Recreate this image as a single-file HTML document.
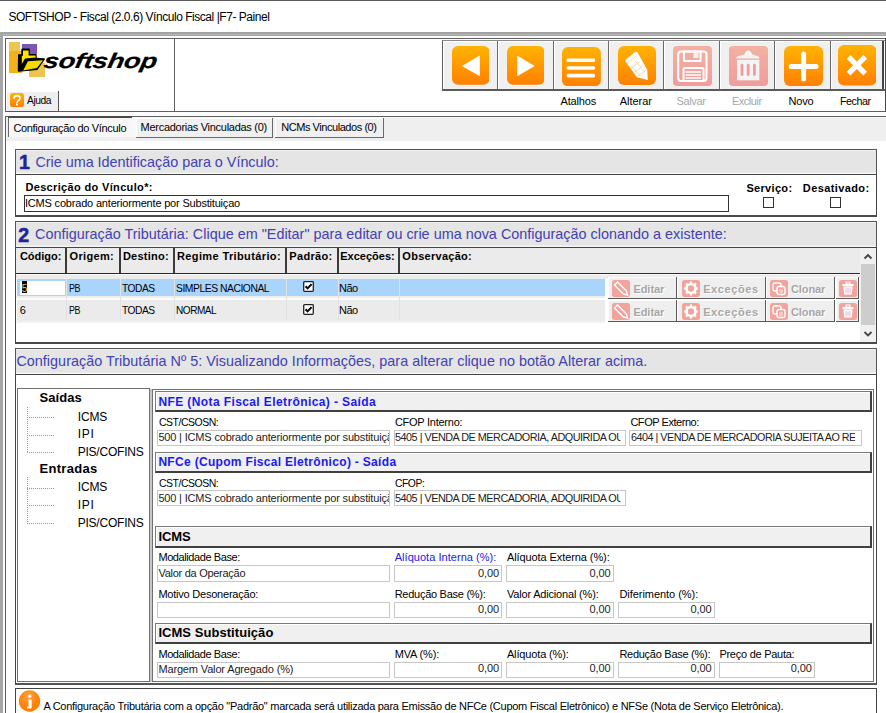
<!DOCTYPE html><html><head><meta charset='utf-8'><style>
*{margin:0;padding:0;box-sizing:border-box}
html,body{width:886px;height:713px;overflow:hidden;background:#fff}
body{position:relative;font-family:"Liberation Sans",sans-serif;color:#000}
div,span,svg{position:absolute}
span{white-space:pre;line-height:0;display:block}
span>i{font-style:normal}
.t{font-size:11px;letter-spacing:-0.25px}
.b{font-size:11px;font-weight:bold;letter-spacing:0.2px}
.btn{background:#f0f0f0;border-right:1px solid #6a6a6a;border-bottom:1px solid #6a6a6a;box-shadow:inset 1px 1px 0 #fff}
.inp{background:#fff;border:1px solid #c9c9c9}
.hdr{background:#f0f0f0;border:1px solid #6a6a6a;box-shadow:inset -1px -2px 0 #404040, inset 1px 1px 0 #fff}
</style></head><body><div style="left:0px;top:0px;width:886px;height:1px;background:#5b5b5b"></div>
<span style="left:8.4px;top:17.24px;font-size:12px;color:#000;letter-spacing:-0.461px;">SOFTSHOP - Fiscal (2.0.6) Vínculo Fiscal |F7- Painel</span>
<div style="left:0px;top:32px;width:886px;height:4.2px;background:#a2a2a2"></div>
<div style="left:3px;top:34.2px;width:883px;height:0.6px;background:#b8b8b8"></div>
<div style="left:0px;top:32px;width:3px;height:681px;background:#a6a6a6"></div>
<div style="left:3px;top:36px;width:883px;height:677px;background:#fcfcfc"></div>
<div style="left:5px;top:38px;width:881px;height:74px;background:#fff;border:1px solid #5f5f5f;border-right:1px solid #4a4a4a"></div>
<div style="left:174px;top:39px;width:1px;height:72px;background:#5f5f5f"></div>
<div style="left:9px;top:42px;width:11px;height:10px;background:#ecc64e"></div>
<div style="left:9px;top:51px;width:13px;height:22px;background:#f3b21c"></div>
<div style="left:22px;top:44px;width:14.5px;height:10px;background:#7b57b3"></div>
<div style="left:29px;top:63px;width:16px;height:14px;background:#ecc54e"></div>
<svg style="left:14px;top:44px" width="34" height="32" viewBox="0 0 34 32">
<path d="M4 10.3 L7.3 10.3 L7.3 5.2 Q7.5 4.5 8.3 4.5 L15 4.5 Q15.8 4.6 15.8 5.4 L15.8 10 L21.8 10 Q22.6 10.2 22.7 11 L22.7 13.8 L30.2 14.2 Q31.4 14.4 30.8 15.4 L23.4 26 L4.8 27.8 Q3.8 27.8 3.8 26.8 Z" fill="#000"/>
<path d="M9 6.6 L14.6 6.6 L14.6 11.5 L21.6 11.5 L21.6 13.6 L11 14.6 L7.8 20 L7.8 11.8 L9 11.8 Z" fill="#ffe400"/>
<path d="M13.9 17.2 L28.9 16.2 L23 23.9 L9.2 26.4 Z" fill="#f5dc00"/>
</svg>
<span style="left:44.4px;top:61.12px;font-size:21px;font-weight:bold;color:#000;letter-spacing:-0.200px;font-style:italic;-webkit-text-stroke:0.2px #000;transform:scaleX(1.30) skewX(-8deg);transform-origin:0 0">softshop</span>
<div style="left:6px;top:91px;width:53px;height:21px;background:#efefef;border-right:1px solid #555;border-bottom:1px solid #555;box-shadow:inset 1px 1px 0 #fff"></div>
<svg style="left:10px;top:93px" width="14" height="14" viewBox="0 0 14 14"><defs><linearGradient id="gq" x1="0" y1="0" x2="0" y2="1"><stop offset="0" stop-color="#ffb400"/><stop offset="1" stop-color="#ff7c00"/></linearGradient></defs><rect width="14" height="14" rx="2.5" fill="url(#gq)"/><path d="M4 5.2 Q4.3 2.6 7.1 2.6 Q10 2.7 10.1 5.2 Q10 6.6 8.3 7.6 Q7.1 8.3 7.1 9.8" fill="none" stroke="#fff" stroke-width="1.6" stroke-linecap="round"/><circle cx="7" cy="11.6" r="1.05" fill="#fff"/></svg>
<span style="left:26.9px;top:99.69px;font-size:11px;color:#000;letter-spacing:-0.500px;transform:scaleX(0.9328);transform-origin:0 0;--x:0px;">Ajuda</span>
<div style="left:442px;top:40px;width:443px;height:51px;border-left:1px solid #5f5f5f;border-bottom:2px solid #5a5a5a;border-top:1px solid #8a8a8a"></div>
<div style="left:443px;top:41px;width:55px;height:48px;background:#f0f0f0;border-right:1.5px solid #6a6a6a;box-shadow:inset 1px 1px 0 #fff"></div>
<div style="left:498px;top:41px;width:56px;height:48px;background:#f0f0f0;border-right:1.5px solid #6a6a6a;box-shadow:inset 1px 1px 0 #fff"></div>
<div style="left:554px;top:41px;width:55px;height:48px;background:#f0f0f0;border-right:1.5px solid #6a6a6a;box-shadow:inset 1px 1px 0 #fff"></div>
<div style="left:609px;top:41px;width:55px;height:48px;background:#f0f0f0;border-right:1.5px solid #6a6a6a;box-shadow:inset 1px 1px 0 #fff"></div>
<div style="left:664px;top:41px;width:56px;height:48px;background:#f0f0f0;border-right:1.5px solid #6a6a6a;box-shadow:inset 1px 1px 0 #fff"></div>
<div style="left:720px;top:41px;width:55px;height:48px;background:#f0f0f0;border-right:1.5px solid #6a6a6a;box-shadow:inset 1px 1px 0 #fff"></div>
<div style="left:775px;top:41px;width:56px;height:48px;background:#f0f0f0;border-right:1.5px solid #6a6a6a;box-shadow:inset 1px 1px 0 #fff"></div>
<div style="left:831px;top:41px;width:53px;height:48px;background:#f0f0f0;border-right:2px solid #454545;box-shadow:inset 1px 1px 0 #fff"></div>
<span style="left:560.6px;top:100.79px;font-size:11px;color:#000;letter-spacing:-0.182px;">Atalhos</span>
<span style="left:619.8px;top:100.79px;font-size:11px;color:#000;letter-spacing:-0.056px;">Alterar</span>
<span style="left:676.4px;top:100.79px;font-size:11px;color:#a8a8a8;letter-spacing:-0.323px;">Salvar</span>
<span style="left:732.0px;top:100.79px;font-size:11px;color:#a8a8a8;letter-spacing:-0.490px;">Excluir</span>
<span style="left:788.6px;top:100.79px;font-size:11px;color:#000;letter-spacing:-0.254px;">Novo</span>
<span style="left:839.6px;top:100.79px;font-size:11px;color:#000;letter-spacing:-0.500px;transform:scaleX(0.9790);transform-origin:0 0;--x:0px;">Fechar</span>
<svg style="left:451.6px;top:46.2px" width="37.6" height="38.8" viewBox="0 0 37.6 38.8"><defs><linearGradient id="go1" x1="0" y1="0" x2="0" y2="1"><stop offset="0" stop-color="#ffb300"/><stop offset="1" stop-color="#ff8000"/></linearGradient></defs><rect x="0" y="0" width="37.6" height="38.8" rx="6" fill="url(#go1)"/><path d="M9.9 20 L27.8 9.6 L27.8 30.2 Z" fill="#fff"/></svg>
<svg style="left:506.7px;top:46.2px" width="37.7" height="38.8" viewBox="0 0 37.7 38.8"><defs><linearGradient id="go2" x1="0" y1="0" x2="0" y2="1"><stop offset="0" stop-color="#ffb300"/><stop offset="1" stop-color="#ff8000"/></linearGradient></defs><rect x="0" y="0" width="37.7" height="38.8" rx="6" fill="url(#go2)"/><path d="M27.8 20 L10.1 9.6 L10.1 30.2 Z" fill="#fff"/></svg>
<svg style="left:562.4px;top:46.5px" width="38.9" height="39.2" viewBox="0 0 38.9 39.2"><defs><linearGradient id="go3" x1="0" y1="0" x2="0" y2="1"><stop offset="0" stop-color="#ffb300"/><stop offset="1" stop-color="#ff8000"/></linearGradient></defs><rect x="0" y="0" width="38.9" height="39.2" rx="6" fill="url(#go3)"/><rect x="4.6" y="11.5" width="28.5" height="3.6" rx="1.5" fill="#fff"/><rect x="4.6" y="19.2" width="28.5" height="3.6" rx="1.5" fill="#fff"/><rect x="4.6" y="26.8" width="28.5" height="3.6" rx="1.5" fill="#fff"/></svg>
<svg style="left:618px;top:46px" width="38" height="39" viewBox="0 0 38 39"><defs><linearGradient id="go4" x1="0" y1="0" x2="0" y2="1"><stop offset="0" stop-color="#ffb300"/><stop offset="1" stop-color="#ff8000"/></linearGradient></defs><rect x="0" y="0" width="38" height="39" rx="6" fill="url(#go4)"/><path d="M17.2 6 Q18.5 5.2 19.5 6.5 L29.2 23.4 L29.8 34 L18.8 31.2 L7.6 15.6 Q6.8 14.2 8 13.2 Z" fill="#fff"/><path d="M8.8 17.2 L19.8 8.8 M12.5 22.5 L21.5 15.8 M15.5 26.8 L24.5 20 M18.8 31 L28.6 23.8 M13 19.5 L22.5 30 M16.8 14.5 L26.6 25.8" stroke="#f8c888" stroke-width="0.7" fill="none"/></svg>
<svg style="left:672.5px;top:46px" width="39" height="40" viewBox="0 0 39 40"><defs><linearGradient id="gd5" x1="0" y1="0" x2="0" y2="1"><stop offset="0" stop-color="#f2b2a2"/><stop offset="1" stop-color="#f09c9c"/></linearGradient></defs><rect x="0" y="0" width="39" height="40" rx="4" fill="url(#gd5)"/><rect x="5.2" y="5.4" width="28.3" height="29.6" rx="3" fill="none" stroke="#fff" stroke-width="2"/><rect x="11" y="5.5" width="16.5" height="9.5" fill="none" stroke="#fff" stroke-width="2"/><rect x="20.5" y="7" width="5" height="5" fill="#f0f0f0"/><rect x="10.5" y="22" width="20" height="13" rx="1.5" fill="none" stroke="#fff" stroke-width="2"/><path d="M12.5 26 H28 M12.5 29 H28 M12.5 32 H28" stroke="#fff" stroke-width="1.3"/></svg>
<svg style="left:728.5px;top:45.5px" width="39" height="40" viewBox="0 0 39 40"><defs><linearGradient id="gd6" x1="0" y1="0" x2="0" y2="1"><stop offset="0" stop-color="#f2b2a2"/><stop offset="1" stop-color="#f09c9c"/></linearGradient></defs><rect x="0" y="0" width="39" height="40" rx="4" fill="url(#gd6)"/><path d="M7 12.5 Q7.5 10 10.5 9.8 L15 8.5 Q17 4.5 19.3 4.6 Q21.5 4.5 23.5 8.5 L27.5 9.8 Q30.5 10.5 30.5 12.5 Z" fill="#f4f4f4"/><rect x="8" y="13.8" width="22.3" height="20.5" fill="#f4f4f4"/><rect x="11.6" y="17.8" width="2.8" height="12.2" rx="1.4" fill="#f09c9c"/><rect x="17.8" y="17.8" width="2.8" height="12.2" rx="1.4" fill="#f09c9c"/><rect x="24" y="17.8" width="2.8" height="12.2" rx="1.4" fill="#f09c9c"/></svg>
<svg style="left:783.7px;top:45.6px" width="39" height="40" viewBox="0 0 39 40"><defs><linearGradient id="go7" x1="0" y1="0" x2="0" y2="1"><stop offset="0" stop-color="#ffb300"/><stop offset="1" stop-color="#ff8000"/></linearGradient></defs><rect x="0" y="0" width="39" height="40" rx="6" fill="url(#go7)"/><rect x="17.1" y="5.6" width="5" height="29.8" rx="2.5" fill="#fff"/><rect x="4.7" y="18" width="29.8" height="5" rx="2.5" fill="#fff"/></svg>
<svg style="left:837.8px;top:45.2px" width="38.5" height="40.5" viewBox="0 0 38.5 40.5"><defs><linearGradient id="go8" x1="0" y1="0" x2="0" y2="1"><stop offset="0" stop-color="#ffb300"/><stop offset="1" stop-color="#ff8000"/></linearGradient></defs><rect x="0" y="0" width="38.5" height="40.5" rx="6" fill="url(#go8)"/><path d="M10.6 11.9 L27.2 28.6 M27.2 11.9 L10.6 28.6" stroke="#fff" stroke-width="5.2" stroke-linecap="butt"/></svg>
<div style="left:5px;top:116px;width:881px;height:597px;background:#fff;border-top:1px solid #5f5f5f;border-left:1px solid #5f5f5f"></div>
<div style="left:6px;top:117px;width:880px;height:24px;background:#efefef"></div>
<div style="left:6px;top:117px;width:880px;height:1px;background:#f8f8f8"></div>
<div style="left:132px;top:117px;width:4px;height:20px;background:#f8f8f8"></div>
<div style="left:8px;top:117px;width:124px;height:20px;background:#f7f7f7;border-left:1px solid #6a6a6a"></div>
<div style="left:8px;top:116px;width:124px;height:1.5px;background:#4a4a4a"></div>
<span style="left:13.4px;top:127.79px;font-size:11px;color:#000;letter-spacing:-0.334px;">Configuração do Vínculo</span>
<div style="left:136px;top:117.8px;width:137px;height:19.8px;background:#f0f0f0;border-right:1px solid #6a6a6a;border-bottom:1px solid #6a6a6a;box-shadow:inset 1px 1px 0 #fff"></div>
<span style="left:140.6px;top:126.89px;font-size:11px;color:#000;letter-spacing:-0.285px;">Mercadorias Vinculadas (0)</span>
<div style="left:275px;top:117.8px;width:109px;height:19.8px;background:#f0f0f0;border-right:1px solid #6a6a6a;border-bottom:1px solid #6a6a6a;box-shadow:inset 1px 1px 0 #fff"></div>
<span style="left:281.2px;top:126.89px;font-size:11px;color:#000;letter-spacing:-0.442px;">NCMs Vinculados (0)</span>
<div style="left:15px;top:149px;width:862px;height:26px;background:#e5e5e5;border:1px solid #555;border-bottom:1px solid #555;box-shadow:inset 0 1px 0 #f2f2f2, inset 0 -1.5px 0 #f6f6f6"></div>
<div style="left:15px;top:174px;width:862px;height:43.2px;background:#fff;border:1px solid #444;border-bottom:2px solid #4a4a4a"></div>
<span style="left:19.0px;top:161.81px;font-size:19.6px;font-weight:bold;color:#22229a;letter-spacing:0.000px;-webkit-text-stroke:0.5px #22229a">1</span>
<span style="left:35.4px;top:162.21px;font-size:14.4px;color:#4141b1;letter-spacing:-0.018px;">Crie uma Identificação para o Vínculo:</span>
<span style="left:25.4px;top:186.79px;font-size:11px;font-weight:bold;color:#000;letter-spacing:0.345px;">Descrição do Vínculo*:</span>
<div style="left:24px;top:195px;width:705px;height:17px;background:#fff;border:1px solid #333"></div>
<span style="left:25.0px;top:203.19px;font-size:11px;color:#000;letter-spacing:-0.189px;">ICMS cobrado anteriormente por Substituiçao</span>
<span style="left:746.4px;top:187.79px;font-size:11px;font-weight:bold;color:#000;letter-spacing:0.322px;">Serviço:</span>
<span style="left:802.8px;top:187.79px;font-size:11px;font-weight:bold;color:#000;letter-spacing:0.391px;">Desativado:</span>
<div style="left:763px;top:197px;width:11px;height:11px;border:1px solid #333;background:#fff"></div>
<div style="left:830px;top:197px;width:11px;height:11px;border:1px solid #333;background:#fff"></div>
<div style="left:15px;top:221px;width:862px;height:27px;background:#e5e5e5;border:1px solid #555;border-bottom:1px solid #555;box-shadow:inset 0 1px 0 #f2f2f2, inset 0 -1.5px 0 #f6f6f6"></div>
<div style="left:15px;top:247px;width:862px;height:96.6px;background:#fff;border:1px solid #444;border-bottom:2px solid #4a4a4a"></div>
<span style="left:18.2px;top:235.31px;font-size:19.6px;font-weight:bold;color:#22229a;letter-spacing:0.000px;-webkit-text-stroke:0.5px #22229a">2</span>
<span style="left:35.1px;top:233.81px;font-size:14.4px;color:#4141b1;letter-spacing:0.006px;">Configuração Tributária: Clique em &quot;Editar&quot; para editar ou crie uma nova Configuração clonando a existente:</span>
<div style="left:16px;top:248px;width:844px;height:25px;background:#ebebeb"></div>
<div style="left:16px;top:272.5px;width:844px;height:1.7px;background:#2a2a2a"></div>
<div style="left:65px;top:248px;width:2px;height:25px;background:#3a3a3a"></div>
<div style="left:118.5px;top:248px;width:2px;height:25px;background:#3a3a3a"></div>
<div style="left:172.5px;top:248px;width:2px;height:25px;background:#3a3a3a"></div>
<div style="left:285px;top:248px;width:2px;height:25px;background:#3a3a3a"></div>
<div style="left:336.5px;top:248px;width:2px;height:25px;background:#3a3a3a"></div>
<div style="left:398px;top:248px;width:2px;height:25px;background:#3a3a3a"></div>
<span style="left:19.9px;top:255.69px;font-size:11px;font-weight:bold;color:#000;letter-spacing:0.004px;">Código:</span>
<span style="left:69.5px;top:255.69px;font-size:11px;font-weight:bold;color:#000;letter-spacing:0.332px;">Origem:</span>
<span style="left:122.9px;top:255.69px;font-size:11px;font-weight:bold;color:#000;letter-spacing:0.238px;">Destino:</span>
<span style="left:177.0px;top:255.69px;font-size:11px;font-weight:bold;color:#000;letter-spacing:0.376px;">Regime Tributário:</span>
<span style="left:289.29999999999995px;top:255.69px;font-size:11px;font-weight:bold;color:#000;letter-spacing:0.318px;">Padrão:</span>
<span style="left:340.2px;top:255.69px;font-size:11px;font-weight:bold;color:#000;letter-spacing:0.017px;">Exceções:</span>
<span style="left:402.29999999999995px;top:255.69px;font-size:11px;font-weight:bold;color:#000;letter-spacing:0.282px;">Observação:</span>
<div style="left:16px;top:274px;width:844px;height:5px;background:#ececec"></div>
<div style="left:16px;top:274px;width:844px;height:1px;background:#fafafa"></div>
<div style="left:17px;top:278.8px;width:588px;height:17.2px;background:#a9d5fd"></div>
<div style="left:16px;top:296px;width:589px;height:2px;background:#f1eeea"></div>
<div style="left:16px;top:298px;width:589px;height:2px;background:#fcfcfc"></div>
<div style="left:17px;top:300px;width:588px;height:20.5px;background:#ebebeb"></div>
<div style="left:16px;top:320.5px;width:589px;height:2px;background:#f3f3f3"></div>
<div style="left:66px;top:279px;width:1px;height:41px;background:#e2e2e2"></div>
<div style="left:119.5px;top:279px;width:1px;height:41px;background:#e2e2e2"></div>
<div style="left:173.5px;top:279px;width:1px;height:41px;background:#e2e2e2"></div>
<div style="left:286px;top:279px;width:1px;height:41px;background:#e2e2e2"></div>
<div style="left:337.5px;top:279px;width:1px;height:41px;background:#e2e2e2"></div>
<div style="left:399px;top:279px;width:1px;height:41px;background:#e2e2e2"></div>
<div style="left:19.8px;top:280.8px;width:45px;height:14.2px;background:#fff"></div>
<div style="left:22px;top:281px;width:5px;height:12px;background:#000"></div>
<span style="left:21.7px;top:288.54px;font-size:10px;color:#e8c080;letter-spacing:0.000px;">5</span>
<span style="left:19.7px;top:310.09px;font-size:11px;color:#000;letter-spacing:-0.250px;">6</span>
<span style="left:69.0px;top:287.99px;font-size:11px;color:#000;letter-spacing:-0.500px;transform:scaleX(0.8094);transform-origin:0 0;--x:0px;">PB</span>
<span style="left:122.4px;top:287.99px;font-size:11px;color:#000;letter-spacing:-0.500px;transform:scaleX(0.9277);transform-origin:0 0;--x:0px;">TODAS</span>
<span style="left:176.3px;top:287.99px;font-size:11px;color:#000;letter-spacing:-0.500px;transform:scaleX(0.9410);transform-origin:0 0;--x:0px;">SIMPLES NACIONAL</span>
<span style="left:339.0px;top:287.99px;font-size:11px;color:#000;letter-spacing:-0.481px;">Não</span>
<span style="left:69.0px;top:310.09px;font-size:11px;color:#000;letter-spacing:-0.500px;transform:scaleX(0.8094);transform-origin:0 0;--x:0px;">PB</span>
<span style="left:122.4px;top:310.09px;font-size:11px;color:#000;letter-spacing:-0.500px;transform:scaleX(0.9277);transform-origin:0 0;--x:0px;">TODAS</span>
<span style="left:176.3px;top:310.09px;font-size:11px;color:#000;letter-spacing:-0.500px;transform:scaleX(0.9113);transform-origin:0 0;--x:0px;">NORMAL</span>
<span style="left:339.0px;top:310.09px;font-size:11px;color:#000;letter-spacing:-0.481px;">Não</span>
<svg style="left:303px;top:281.4px" width="11" height="11" viewBox="0 0 11 11"><rect x="0.7" y="0.7" width="9.6" height="9.6" rx="0.8" fill="#fff" stroke="#222" stroke-width="1.3"/><path d="M2.6 5.3 L4.6 7.4 L8.6 3.1" stroke="#000" stroke-width="2" fill="none"/></svg>
<svg style="left:303px;top:304.1px" width="11" height="11" viewBox="0 0 11 11"><rect x="0.7" y="0.7" width="9.6" height="9.6" rx="0.8" fill="#fff" stroke="#222" stroke-width="1.3"/><path d="M2.6 5.3 L4.6 7.4 L8.6 3.1" stroke="#000" stroke-width="2" fill="none"/></svg>
<div style="left:607.5px;top:276.5px;width:69.0px;height:22px;background:#efefef;border-right:1.5px solid #5a5a5a;border-bottom:1.5px solid #5a5a5a;box-shadow:inset 1px 1px 0 #fff"></div>
<div style="left:677px;top:276.5px;width:88.5px;height:22px;background:#efefef;border-right:1.5px solid #5a5a5a;border-bottom:1.5px solid #5a5a5a;box-shadow:inset 1px 1px 0 #fff"></div>
<div style="left:766px;top:276.5px;width:68.5px;height:22px;background:#efefef;border-right:1.5px solid #5a5a5a;border-bottom:1.5px solid #5a5a5a;box-shadow:inset 1px 1px 0 #fff"></div>
<div style="left:836px;top:276.5px;width:22.700000000000045px;height:22px;background:#efefef;border-right:1.5px solid #5a5a5a;border-bottom:1.5px solid #5a5a5a;box-shadow:inset 1px 1px 0 #fff"></div>
<svg style="left:612px;top:279.5px" width="18" height="17" viewBox="0 0 18 17"><rect x="0" y="0" width="18" height="17" rx="2.5" fill="#f2a49c"/><path d="M2.5 5 L5.5 2 L14.5 11 L15.5 15 L11.5 14 Z" fill="none" stroke="#fff" stroke-width="1.4"/></svg>
<span style="left:634.4px;top:289.69px;font-size:11px;font-weight:bold;color:#ffffff;letter-spacing:-0.039px;">Editar</span>
<span style="left:633.4px;top:288.69px;font-size:11px;font-weight:bold;color:#a6a6a6;letter-spacing:-0.039px;">Editar</span>
<svg style="left:682px;top:279.5px" width="18" height="17" viewBox="0 0 18 17"><rect x="0" y="0" width="18" height="17" rx="2.5" fill="#f2a49c"/><circle cx="9" cy="8.5" r="4.5" fill="none" stroke="#fff" stroke-width="2.6"/><path d="M9 1.5 V4 M9 13 V15.5 M2 8.5 H4.5 M13.5 8.5 H16 M4 3.5 L5.8 5.3 M12.2 11.7 L14 13.5 M14 3.5 L12.2 5.3 M5.8 11.7 L4 13.5" stroke="#fff" stroke-width="2.2"/></svg>
<span style="left:704.1999999999999px;top:289.69px;font-size:11px;font-weight:bold;color:#ffffff;letter-spacing:0.594px;">Exceções</span>
<span style="left:703.1999999999999px;top:288.69px;font-size:11px;font-weight:bold;color:#a6a6a6;letter-spacing:0.594px;">Exceções</span>
<svg style="left:770px;top:279.5px" width="18" height="17" viewBox="0 0 18 17"><rect x="0" y="0" width="18" height="17" rx="2.5" fill="#f2a49c"/><rect x="3" y="3" width="8" height="8" rx="2" fill="none" stroke="#fff" stroke-width="1.4"/><rect x="7" y="6.5" width="8" height="8" rx="2" fill="#f2a49c" stroke="#fff" stroke-width="1.4"/><path d="M9 10 H13 M9 12 H13" stroke="#fff" stroke-width="0.8"/></svg>
<span style="left:792.0px;top:289.69px;font-size:11px;font-weight:bold;color:#ffffff;letter-spacing:-0.111px;">Clonar</span>
<span style="left:791.0px;top:288.69px;font-size:11px;font-weight:bold;color:#a6a6a6;letter-spacing:-0.111px;">Clonar</span>
<svg style="left:838.5px;top:279.5px" width="18" height="17" viewBox="0 0 18 17"><rect x="0" y="0" width="18" height="17" rx="2.5" fill="#f2a49c"/><rect x="3.5" y="4" width="11" height="2" fill="#fff"/><rect x="7" y="2" width="4" height="2" fill="none" stroke="#fff" stroke-width="1"/><path d="M4.5 6.5 H13.5 L12.8 14.5 H5.2 Z" fill="#fff"/><path d="M7 8 V13 M9 8 V13 M11 8 V13" stroke="#e8b0e0" stroke-width="1"/></svg>
<div style="left:607.5px;top:299.5px;width:69.0px;height:22px;background:#efefef;border-right:1.5px solid #5a5a5a;border-bottom:1.5px solid #5a5a5a;box-shadow:inset 1px 1px 0 #fff"></div>
<div style="left:677px;top:299.5px;width:88.5px;height:22px;background:#efefef;border-right:1.5px solid #5a5a5a;border-bottom:1.5px solid #5a5a5a;box-shadow:inset 1px 1px 0 #fff"></div>
<div style="left:766px;top:299.5px;width:68.5px;height:22px;background:#efefef;border-right:1.5px solid #5a5a5a;border-bottom:1.5px solid #5a5a5a;box-shadow:inset 1px 1px 0 #fff"></div>
<div style="left:836px;top:299.5px;width:22.700000000000045px;height:22px;background:#efefef;border-right:1.5px solid #5a5a5a;border-bottom:1.5px solid #5a5a5a;box-shadow:inset 1px 1px 0 #fff"></div>
<svg style="left:612px;top:302.5px" width="18" height="17" viewBox="0 0 18 17"><rect x="0" y="0" width="18" height="17" rx="2.5" fill="#f2a49c"/><path d="M2.5 5 L5.5 2 L14.5 11 L15.5 15 L11.5 14 Z" fill="none" stroke="#fff" stroke-width="1.4"/></svg>
<span style="left:634.4px;top:312.69px;font-size:11px;font-weight:bold;color:#ffffff;letter-spacing:-0.039px;">Editar</span>
<span style="left:633.4px;top:311.69px;font-size:11px;font-weight:bold;color:#a6a6a6;letter-spacing:-0.039px;">Editar</span>
<svg style="left:682px;top:302.5px" width="18" height="17" viewBox="0 0 18 17"><rect x="0" y="0" width="18" height="17" rx="2.5" fill="#f2a49c"/><circle cx="9" cy="8.5" r="4.5" fill="none" stroke="#fff" stroke-width="2.6"/><path d="M9 1.5 V4 M9 13 V15.5 M2 8.5 H4.5 M13.5 8.5 H16 M4 3.5 L5.8 5.3 M12.2 11.7 L14 13.5 M14 3.5 L12.2 5.3 M5.8 11.7 L4 13.5" stroke="#fff" stroke-width="2.2"/></svg>
<span style="left:704.1999999999999px;top:312.69px;font-size:11px;font-weight:bold;color:#ffffff;letter-spacing:0.594px;">Exceções</span>
<span style="left:703.1999999999999px;top:311.69px;font-size:11px;font-weight:bold;color:#a6a6a6;letter-spacing:0.594px;">Exceções</span>
<svg style="left:770px;top:302.5px" width="18" height="17" viewBox="0 0 18 17"><rect x="0" y="0" width="18" height="17" rx="2.5" fill="#f2a49c"/><rect x="3" y="3" width="8" height="8" rx="2" fill="none" stroke="#fff" stroke-width="1.4"/><rect x="7" y="6.5" width="8" height="8" rx="2" fill="#f2a49c" stroke="#fff" stroke-width="1.4"/><path d="M9 10 H13 M9 12 H13" stroke="#fff" stroke-width="0.8"/></svg>
<span style="left:792.0px;top:312.69px;font-size:11px;font-weight:bold;color:#ffffff;letter-spacing:-0.111px;">Clonar</span>
<span style="left:791.0px;top:311.69px;font-size:11px;font-weight:bold;color:#a6a6a6;letter-spacing:-0.111px;">Clonar</span>
<svg style="left:838.5px;top:302.5px" width="18" height="17" viewBox="0 0 18 17"><rect x="0" y="0" width="18" height="17" rx="2.5" fill="#f2a49c"/><rect x="3.5" y="4" width="11" height="2" fill="#fff"/><rect x="7" y="2" width="4" height="2" fill="none" stroke="#fff" stroke-width="1"/><path d="M4.5 6.5 H13.5 L12.8 14.5 H5.2 Z" fill="#fff"/><path d="M7 8 V13 M9 8 V13 M11 8 V13" stroke="#e8b0e0" stroke-width="1"/></svg>
<div style="left:860px;top:248px;width:16px;height:94px;background:#f0f0f0"></div>
<div style="left:861px;top:264px;width:14px;height:61px;background:#cdcdcd"></div>
<svg style="left:860px;top:252px" width="16" height="10" viewBox="0 0 16 10"><path d="M4.5 6.5 L8 3 L11.5 6.5" stroke="#444" stroke-width="1.8" fill="none"/></svg>
<svg style="left:860px;top:329px" width="16" height="10" viewBox="0 0 16 10"><path d="M4.5 3 L8 6.5 L11.5 3" stroke="#444" stroke-width="1.8" fill="none"/></svg>
<div style="left:15px;top:348px;width:862px;height:27px;background:#e5e5e5;border:1px solid #555;border-bottom:1px solid #555;box-shadow:inset 0 1px 0 #f2f2f2, inset 0 -1.5px 0 #f6f6f6"></div>
<div style="left:15px;top:374px;width:862px;height:310.5px;background:#fff;border:1px solid #444;border-bottom:2px solid #555"></div>
<span style="left:16.4px;top:361.21px;font-size:14.4px;color:#4141b1;letter-spacing:0.021px;">Configuração Tributária Nº 5: Visualizando Informações, para alterar clique no botão Alterar acima.</span>
<div style="left:17px;top:388.3px;width:133.3px;height:293.7px;background:#fff;border:1px solid #707070"></div>
<div style="left:150.3px;top:388.5px;width:1.6px;height:293.5px;background:#c8c8c8"></div>
<div style="left:151.8px;top:388.5px;width:722.3px;height:293.5px;background:#fff;border:1px solid #707070"></div>
<span style="left:39.6px;top:398.20px;font-size:13px;font-weight:bold;color:#000;letter-spacing:0.023px;">Saídas</span>
<span style="left:39.6px;top:469.20px;font-size:13px;font-weight:bold;color:#000;letter-spacing:0.271px;">Entradas</span>
<span style="left:77.7px;top:416.84px;font-size:12px;color:#000;letter-spacing:-0.132px;">ICMS</span>
<span style="left:77.7px;top:434.44px;font-size:12px;color:#000;letter-spacing:0.731px;">IPI</span>
<span style="left:77.7px;top:451.84px;font-size:12px;color:#000;letter-spacing:-0.223px;">PIS/COFINS</span>
<span style="left:77.7px;top:487.14px;font-size:12px;color:#000;letter-spacing:-0.132px;">ICMS</span>
<span style="left:77.7px;top:505.34px;font-size:12px;color:#000;letter-spacing:0.731px;">IPI</span>
<span style="left:77.7px;top:523.14px;font-size:12px;color:#000;letter-spacing:-0.223px;">PIS/COFINS</span>
<div style="left:26.5px;top:406.5px;width:1px;height:46.5px;background-image:repeating-linear-gradient(180deg,#999 0 1px,transparent 1px 2px)"></div>
<div style="left:26.5px;top:417px;width:28.5px;height:1px;background-image:repeating-linear-gradient(90deg,#999 0 1px,transparent 1px 2px)"></div>
<div style="left:26.5px;top:434.5px;width:28.5px;height:1px;background-image:repeating-linear-gradient(90deg,#999 0 1px,transparent 1px 2px)"></div>
<div style="left:26.5px;top:452.3px;width:28.5px;height:1px;background-image:repeating-linear-gradient(90deg,#999 0 1px,transparent 1px 2px)"></div>
<div style="left:26.5px;top:477px;width:1px;height:47px;background-image:repeating-linear-gradient(180deg,#999 0 1px,transparent 1px 2px)"></div>
<div style="left:26.5px;top:487.6px;width:28.5px;height:1px;background-image:repeating-linear-gradient(90deg,#999 0 1px,transparent 1px 2px)"></div>
<div style="left:26.5px;top:505.4px;width:28.5px;height:1px;background-image:repeating-linear-gradient(90deg,#999 0 1px,transparent 1px 2px)"></div>
<div style="left:26.5px;top:523px;width:28.5px;height:1px;background-image:repeating-linear-gradient(90deg,#999 0 1px,transparent 1px 2px)"></div>
<div style="left:155px;top:391px;width:717px;height:21px;background:#f0f0f0;border:1px solid #7a7a7a;border-right:2px solid #404040;border-bottom:2px solid #404040;box-shadow:inset 1px 1px 0 #fff"></div>
<span style="left:158.4px;top:401.64px;font-size:12px;font-weight:bold;color:#1a1af5;letter-spacing:0.397px;">NFE (Nota Fiscal Eletrônica) - Saída</span>
<span style="left:158.6px;top:421.69px;font-size:11px;color:#000;letter-spacing:-0.500px;transform:scaleX(0.9510);transform-origin:0 0;--x:0px;">CST/CSOSN:</span>
<span style="left:394.9px;top:421.69px;font-size:11px;color:#000;letter-spacing:-0.255px;">CFOP Interno:</span>
<span style="left:630.4px;top:421.69px;font-size:11px;color:#000;letter-spacing:-0.460px;">CFOP Externo:</span>
<div style="left:157px;top:429.5px;width:233.3px;height:16.0px;background:#fff;border:1px solid #c6c6c6"></div>
<span style="left:158.4px;top:437.19px;font-size:11px;color:#222;letter-spacing:-0.172px;width:230.3px;overflow:hidden;line-height:14px;height:14px;top:429.70px">500 | ICMS cobrado anteriormente por substituição tributária</span>
<div style="left:394px;top:429.5px;width:232.29999999999995px;height:16.0px;background:#fff;border:1px solid #c6c6c6"></div>
<span style="left:395.4px;top:437.19px;font-size:11px;color:#222;letter-spacing:-0.500px;transform:scaleX(0.9843);transform-origin:0 0;--x:0px;width:229.29999999999995px;overflow:hidden;line-height:14px;height:14px;top:429.70px">5405 | VENDA DE MERCADORIA, ADQUIRIDA OU RECEBIDA</span>
<div style="left:629.3px;top:429.5px;width:232.30000000000007px;height:16.0px;background:#fff;border:1px solid #c6c6c6"></div>
<span style="left:630.6999999999999px;top:437.19px;font-size:11px;color:#222;letter-spacing:-0.500px;transform:scaleX(0.9789);transform-origin:0 0;--x:0px;width:229.30000000000007px;overflow:hidden;line-height:14px;height:14px;top:429.70px">6404 | VENDA DE MERCADORIA SUJEITA AO REGIME</span>
<div style="left:155px;top:451.5px;width:717px;height:21px;background:#f0f0f0;border:1px solid #7a7a7a;border-right:2px solid #404040;border-bottom:2px solid #404040;box-shadow:inset 1px 1px 0 #fff"></div>
<span style="left:158.4px;top:462.14px;font-size:12px;font-weight:bold;color:#1a1af5;letter-spacing:0.315px;">NFCe (Cupom Fiscal Eletrônico) - Saída</span>
<span style="left:158.6px;top:482.69px;font-size:11px;color:#000;letter-spacing:-0.500px;transform:scaleX(0.9510);transform-origin:0 0;--x:0px;">CST/CSOSN:</span>
<span style="left:394.9px;top:482.69px;font-size:11px;color:#000;letter-spacing:-0.500px;transform:scaleX(0.9412);transform-origin:0 0;--x:0px;">CFOP:</span>
<div style="left:157px;top:490.3px;width:233.3px;height:16.0px;background:#fff;border:1px solid #c6c6c6"></div>
<span style="left:158.4px;top:497.99px;font-size:11px;color:#222;letter-spacing:-0.172px;width:230.3px;overflow:hidden;line-height:14px;height:14px;top:490.50px">500 | ICMS cobrado anteriormente por substituição tributária</span>
<div style="left:394px;top:490.3px;width:232.29999999999995px;height:16.0px;background:#fff;border:1px solid #c6c6c6"></div>
<span style="left:395.4px;top:497.99px;font-size:11px;color:#222;letter-spacing:-0.500px;transform:scaleX(0.9843);transform-origin:0 0;--x:0px;width:229.29999999999995px;overflow:hidden;line-height:14px;height:14px;top:490.50px">5405 | VENDA DE MERCADORIA, ADQUIRIDA OU RECEBIDA</span>
<div style="left:155px;top:526.2px;width:717px;height:21.5px;background:#f0f0f0;border:1px solid #7a7a7a;border-right:2px solid #404040;border-bottom:2px solid #404040;box-shadow:inset 1px 1px 0 #fff"></div>
<span style="left:158.4px;top:537.30px;font-size:13px;font-weight:bold;color:#000;letter-spacing:-0.110px;">ICMS</span>
<span style="left:158.4px;top:557.49px;font-size:11px;color:#000;letter-spacing:-0.414px;">Modalidade Base:</span>
<span style="left:394.7px;top:557.49px;font-size:11px;color:#2020ee;letter-spacing:0.039px;">Alíquota Interna (%):</span>
<span style="left:506.9px;top:557.49px;font-size:11px;color:#000;letter-spacing:-0.085px;">Alíquota Externa (%):</span>
<div style="left:157px;top:565.3px;width:232.7px;height:16.700000000000045px;background:#fff;border:1px solid #c6c6c6"></div>
<span style="left:158.4px;top:573.69px;font-size:11px;color:#222;letter-spacing:-0.275px;width:229.7px;overflow:hidden;line-height:14px;height:14px;top:566.20px">Valor da Operação</span>
<div style="left:394px;top:565.3px;width:108px;height:16.700000000000045px;background:#fff;border:1px solid #c6c6c6"></div>
<span style="left:394px;width:105px;top:572.69px;font-size:11px;letter-spacing:-0.1px;text-align:right;color:#222">0,00</span>
<div style="left:506.3px;top:565.3px;width:107.30000000000001px;height:16.700000000000045px;background:#fff;border:1px solid #c6c6c6"></div>
<span style="left:506.3px;width:104.30000000000001px;top:572.69px;font-size:11px;letter-spacing:-0.1px;text-align:right;color:#222">0,00</span>
<span style="left:158.4px;top:593.89px;font-size:11px;color:#000;letter-spacing:-0.221px;">Motivo Desoneração:</span>
<span style="left:394.7px;top:593.89px;font-size:11px;color:#000;letter-spacing:-0.270px;">Redução Base (%):</span>
<span style="left:506.9px;top:593.89px;font-size:11px;color:#000;letter-spacing:-0.175px;">Valor Adicional (%):</span>
<span style="left:619.4px;top:593.89px;font-size:11px;color:#000;letter-spacing:-0.040px;">Diferimento (%):</span>
<div style="left:157px;top:602px;width:232.7px;height:16.200000000000045px;background:#fff;border:1px solid #c6c6c6"></div>
<div style="left:394px;top:602px;width:108px;height:16.200000000000045px;background:#fff;border:1px solid #c6c6c6"></div>
<span style="left:394px;width:105px;top:608.89px;font-size:11px;letter-spacing:-0.1px;text-align:right;color:#222">0,00</span>
<div style="left:506.3px;top:602px;width:107.30000000000001px;height:16.200000000000045px;background:#fff;border:1px solid #c6c6c6"></div>
<span style="left:506.3px;width:104.30000000000001px;top:608.89px;font-size:11px;letter-spacing:-0.1px;text-align:right;color:#222">0,00</span>
<div style="left:618.3px;top:602px;width:96.30000000000007px;height:16.200000000000045px;background:#fff;border:1px solid #c6c6c6"></div>
<span style="left:618.3px;width:93.30000000000007px;top:608.89px;font-size:11px;letter-spacing:-0.1px;text-align:right;color:#222">0,00</span>
<div style="left:155px;top:622.5px;width:717px;height:21.5px;background:#f0f0f0;border:1px solid #7a7a7a;border-right:2px solid #404040;border-bottom:2px solid #404040;box-shadow:inset 1px 1px 0 #fff"></div>
<span style="left:158.4px;top:633.40px;font-size:13px;font-weight:bold;color:#000;letter-spacing:0.051px;">ICMS Substituição</span>
<span style="left:158.4px;top:654.19px;font-size:11px;color:#000;letter-spacing:-0.414px;">Modalidade Base:</span>
<span style="left:394.7px;top:654.19px;font-size:11px;color:#000;letter-spacing:-0.141px;">MVA (%):</span>
<span style="left:506.9px;top:654.19px;font-size:11px;color:#000;letter-spacing:-0.144px;">Alíquota (%):</span>
<span style="left:619.4px;top:654.19px;font-size:11px;color:#000;letter-spacing:-0.270px;">Redução Base (%):</span>
<span style="left:719.4px;top:654.19px;font-size:11px;color:#000;letter-spacing:-0.259px;">Preço de Pauta:</span>
<div style="left:157px;top:662.3px;width:232.7px;height:15.5px;background:#fff;border:1px solid #c6c6c6"></div>
<span style="left:158.4px;top:669.49px;font-size:11px;color:#222;letter-spacing:-0.147px;width:229.7px;overflow:hidden;line-height:14px;height:14px;top:662.00px">Margem Valor Agregado (%)</span>
<div style="left:394px;top:662.3px;width:108px;height:15.5px;background:#fff;border:1px solid #c6c6c6"></div>
<span style="left:394px;width:105px;top:668.49px;font-size:11px;letter-spacing:-0.1px;text-align:right;color:#222">0,00</span>
<div style="left:506.3px;top:662.3px;width:107.30000000000001px;height:15.5px;background:#fff;border:1px solid #c6c6c6"></div>
<span style="left:506.3px;width:104.30000000000001px;top:668.49px;font-size:11px;letter-spacing:-0.1px;text-align:right;color:#222">0,00</span>
<div style="left:618.4px;top:662.3px;width:96.20000000000005px;height:15.5px;background:#fff;border:1px solid #c6c6c6"></div>
<span style="left:618.4px;width:93.20000000000005px;top:668.49px;font-size:11px;letter-spacing:-0.1px;text-align:right;color:#222">0,00</span>
<div style="left:718.8px;top:662.3px;width:95.90000000000009px;height:15.5px;background:#fff;border:1px solid #c6c6c6"></div>
<span style="left:718.8px;width:92.90000000000009px;top:668.49px;font-size:11px;letter-spacing:-0.1px;text-align:right;color:#222">0,00</span>
<div style="left:15px;top:688px;width:862px;height:30px;background:#fff;border:1px solid #444"></div>
<svg style="left:18px;top:689px" width="24" height="24" viewBox="0 0 24 24"><defs><radialGradient id="gi" cx="0.45" cy="0.3" r="0.7"><stop offset="0" stop-color="#ffa044"/><stop offset="0.6" stop-color="#ff850f"/><stop offset="1" stop-color="#ff7a00"/></radialGradient></defs><circle cx="11.5" cy="12" r="10.7" fill="url(#gi)"/><circle cx="11.7" cy="7.2" r="1.6" fill="#fff"/><path d="M10.6 10.6 H13.7 V18.5 Q13.7 19.6 12.6 19.6 H9 V17.6 H10.6 Z" fill="#fff"/></svg>
<span style="left:43.4px;top:705.79px;font-size:11px;color:#000;letter-spacing:-0.270px;">A Configuração Tributária com a opção &quot;Padrão&quot; marcada será utilizada para Emissão de NFCe (Cupom Fiscal Eletrônico) e NFSe (Nota de Serviço Eletrônica).</span></body></html>
